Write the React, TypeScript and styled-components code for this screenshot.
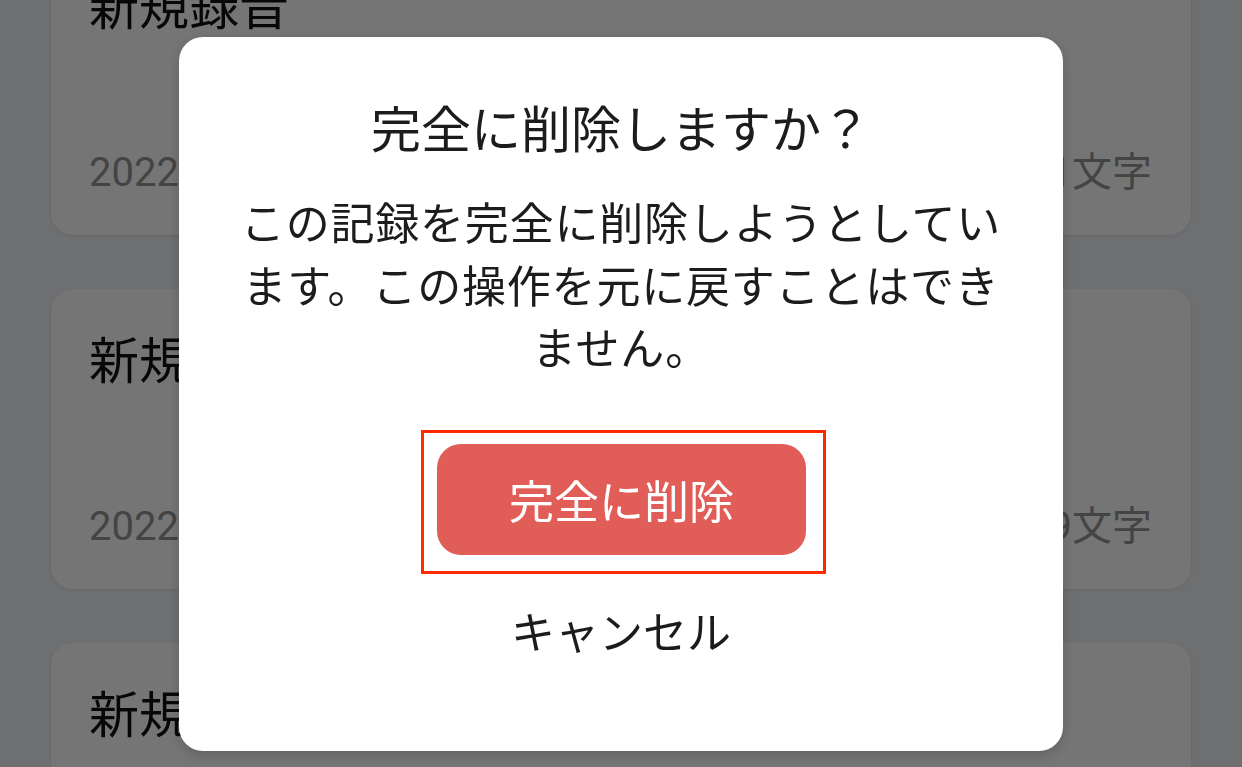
import React from "react";
import styled, { createGlobalStyle } from "styled-components";

const GlobalStyle = createGlobalStyle`
  html, body {
    margin: 0;
    padding: 0;
    width: 1242px;
    height: 767px;
    overflow: hidden;
    background: #eff1f6;
    font-family: "Noto Sans CJK JP", "Noto Sans", sans-serif;
  }
  * { box-sizing: border-box; }
`;

const Page = styled.div`
  width: 1242px;
  height: 767px;
  overflow: hidden;
  background: #eff1f6;
`;

const List = styled.div`
  display: flex;
  flex-direction: column;
  gap: 54px;
  padding: 0 51px;
  margin-top: -65px;
`;

const Card = styled.div`
  height: 300px;
  background: #ffffff;
  border-radius: 22px;
  box-shadow: 0 1px 3px rgba(0, 0, 0, 0.08);
  padding: 36px 39px 36px 38px;
  display: flex;
  flex-direction: column;
  justify-content: space-between;
`;

const CardTitle = styled.div`
  font-family: "Noto Sans CJK JP", sans-serif;
  font-size: 50px;
  line-height: 64px;
  color: #111;
`;

const CardMeta = styled.div`
  display: flex;
  justify-content: space-between;
  align-items: center;
  font-family: "Roboto", "Noto Sans CJK JP", sans-serif;
  font-size: 40px;
  line-height: 52px;
  color: #949494;
`;

const Overlay = styled.div`
  position: fixed;
  inset: 0;
  background: rgba(0, 0, 0, 0.54);
  display: flex;
  justify-content: center;
  align-items: flex-start;
  padding-top: 37px;
`;

const Modal = styled.div`
  width: 884px;
  height: 714px;
  background: #ffffff;
  border-radius: 24px;
  box-shadow: 0 4px 14px rgba(0, 0, 0, 0.18);
  padding: 55px 58px 0;
  display: flex;
  flex-direction: column;
  align-items: center;
  color: #1c1c1e;
`;

const Title = styled.h2`
  margin: 0;
  font-family: "Noto Sans CJK JP", sans-serif;
  font-weight: 400;
  font-size: 50px;
  line-height: 68px;
  text-align: center;
`;

const Message = styled.p`
  margin: 30px 0 0;
  font-family: "Noto Sans CJK JP", sans-serif;
  font-size: 44px;
  letter-spacing: 0.8px;
  line-height: 62.5px;
  text-align: center;
`;

const Highlight = styled.div`
  margin-top: 52px;
  margin-left: 5px;
  border: 3px solid #ff2a00;
  padding: 11px 17px 16px 13px;
`;

const DangerButton = styled.button`
  width: 369px;
  height: 111px;
  border: none;
  border-radius: 24px;
  background: #e05d58;
  color: #ffffff;
  font-family: "Noto Sans CJK JP", sans-serif;
  font-size: 45px;
  display: flex;
  align-items: center;
  justify-content: center;
  cursor: pointer;
`;

const CancelButton = styled.button`
  margin-top: 24px;
  border: none;
  background: transparent;
  color: #1c1c1e;
  font-family: "Noto Sans CJK JP", sans-serif;
  font-size: 44px;
  line-height: 64px;
  padding: 0 20px;
  cursor: pointer;
`;

const records = [
  { title: "新規録音", date: "2022/03/15 14:32", count: "21文字" },
  { title: "新規録音", date: "2022/03/14 09:18", count: "39文字" },
  { title: "新規録音", date: "2022/03/12 18:05", count: "12文字" },
];

export default function App() {
  return (
    <>
      <GlobalStyle />
      <Page>
        <List>
          {records.map((r, i) => (
            <Card key={i}>
              <CardTitle>{r.title}</CardTitle>
              <CardMeta>
                <span>{r.date}</span>
                <span>{r.count}</span>
              </CardMeta>
            </Card>
          ))}
        </List>
      </Page>
      <Overlay>
        <Modal>
          <Title>完全に削除しますか？</Title>
          <Message>
            この記録を完全に削除しようとしています。この操作を元に戻すことはできません。
          </Message>
          <Highlight>
            <DangerButton>完全に削除</DangerButton>
          </Highlight>
          <CancelButton>キャンセル</CancelButton>
        </Modal>
      </Overlay>
    </>
  );
}
